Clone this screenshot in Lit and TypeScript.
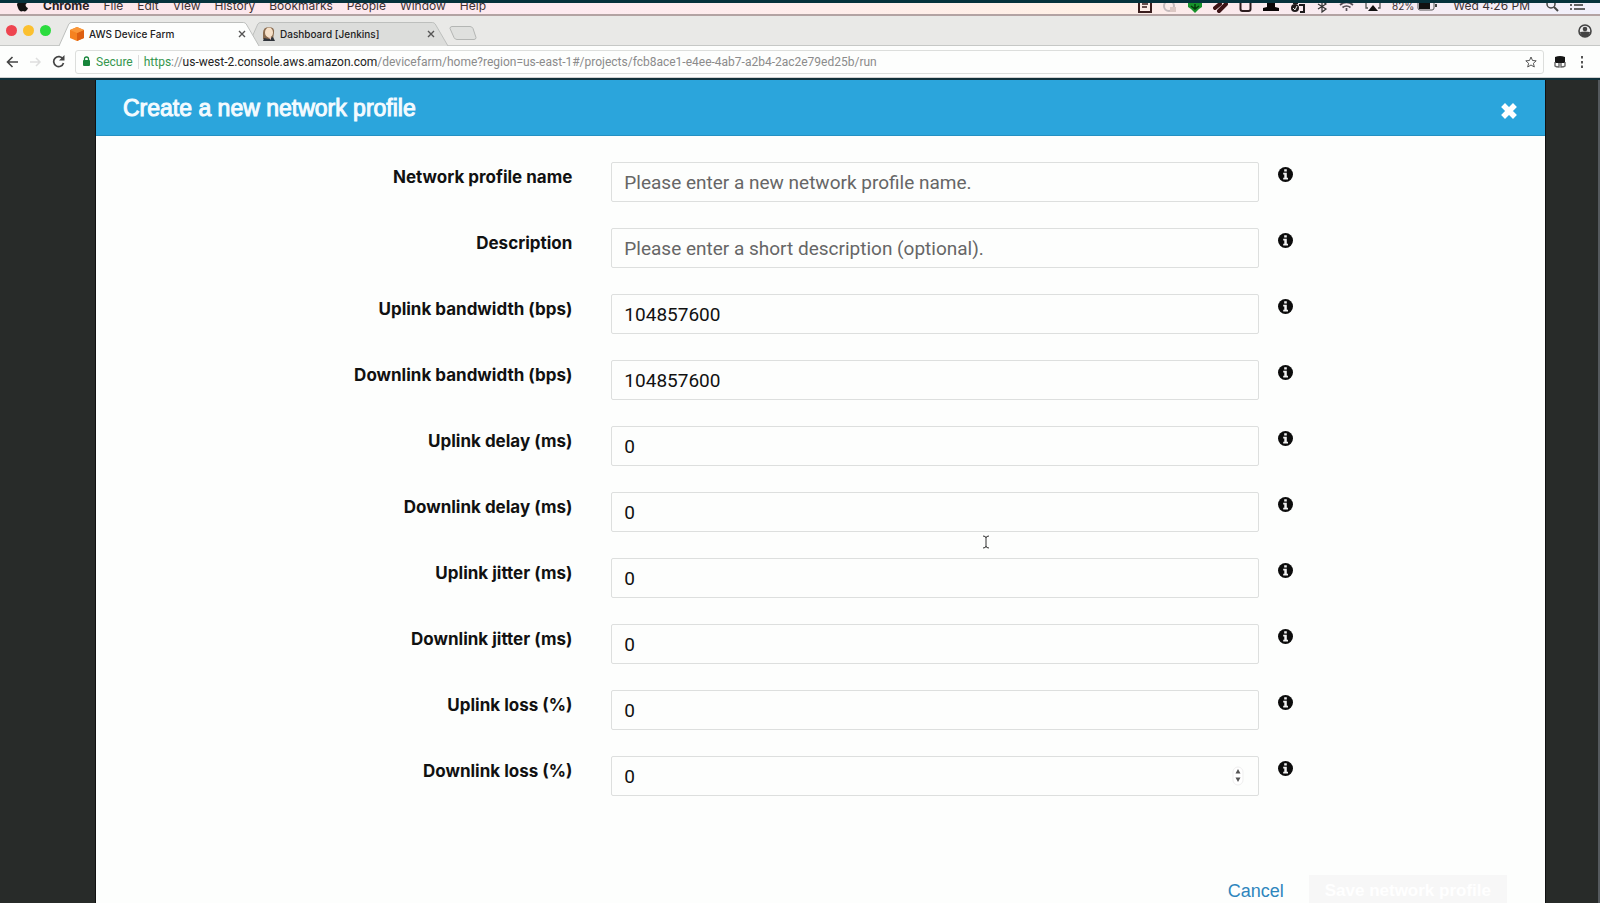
import { LitElement, html, css } from "lit";
import { customElement } from "lit/decorators.js";

interface Field {
  id: string;
  label: string;
  type: "text" | "number";
  value?: string;
  placeholder?: string;
  spinner?: boolean;
}

const FIELDS: Field[] = [
  { id: "name", label: "Network profile name", type: "text", placeholder: "Please enter a new network profile name." },
  { id: "description", label: "Description", type: "text", placeholder: "Please enter a short description (optional)." },
  { id: "up-bandwidth", label: "Uplink bandwidth (bps)", type: "number", value: "104857600" },
  { id: "down-bandwidth", label: "Downlink bandwidth (bps)", type: "number", value: "104857600" },
  { id: "up-delay", label: "Uplink delay (ms)", type: "number", value: "0" },
  { id: "down-delay", label: "Downlink delay (ms)", type: "number", value: "0" },
  { id: "up-jitter", label: "Uplink jitter (ms)", type: "number", value: "0" },
  { id: "down-jitter", label: "Downlink jitter (ms)", type: "number", value: "0" },
  { id: "up-loss", label: "Uplink loss (%)", type: "number", value: "0" },
  { id: "down-loss", label: "Downlink loss (%)", type: "number", value: "0", spinner: true },
];

@customElement("mac-menu-bar")
class MacMenuBar extends LitElement {
  static styles = css`
    :host { display: block; border-top: 3px solid #06323c; border-bottom: 2px solid #b3a3a3; font: 12px/14px Inter, sans-serif; color: #3c3032; }
    .bar { display: flex; justify-content: space-between; align-items: flex-end; height: 11px; padding: 0 15px 0 16px; overflow: hidden; background: linear-gradient(90deg, #fbe6ea, #fdeaf0 35%, #fff0e6 68%, #fbe9ec 76%, #f1f0fb); }
    .menus, .status { display: flex; align-items: flex-end; }
    .menus { gap: 14px; padding-bottom: 1px; }
    .app { font-weight: 700; color: #2a2022; }
    .status { gap: 11px; }
    .text { padding-bottom: 1px; }
    .clock { padding: 0 5px 1px; }
    .small { font-size: 10px; }
    .battery { display: flex; align-items: flex-end; gap: 3px; }
    svg { display: block; flex: none; }
  `;
  render() {
    return html`<div class="bar">
      <nav class="menus">
        <svg width="13" height="16" viewBox="0 0 13 16"><path d="M9 1c0 2-1 3-3 3 0-2 1-3 3-3zM1 8c0-3 3-4 5-3 2-1 4-1 5 1-2 1-2 4 1 5-1 3-3 4-5 3-2 1-4 0-5-3z" fill="#111"/></svg>
        <span class="app">Chrome</span>
        ${["File", "Edit", "View", "History", "Bookmarks", "People", "Window", "Help"].map((m) => html`<span>${m}</span>`)}
      </nav>
      <div class="status">
        <svg width="14" height="14" viewBox="0 0 14 14"><path d="M1 0v12h12V0" fill="none" stroke="#3a1d1d" stroke-width="2"/><path d="M4 4h6M4 7h5" fill="none" stroke="#3a1d1d" stroke-width="1.300"/></svg>
        <svg width="14" height="14" viewBox="0 0 14 14"><circle cx="6" cy="6" r="5" fill="none" stroke="#c4babc" stroke-width="2"/><rect x="7" y="7" width="6" height="5" fill="#dcc8c4"/></svg>
        <svg width="14" height="14" viewBox="0 0 14 14"><path d="M0 3h14v4l-3 2-4 4-4-4-3-2z" fill="#17922b"/><path d="M7 4v6M3 6l4 3 4-3" fill="none" stroke="#063d0c" stroke-width="1.500"/></svg>
        <svg width="15" height="14" viewBox="0 0 15 14"><path d="M2 8l5-4M6 11l7-7" stroke="#3c1316" stroke-width="4" stroke-linecap="round"/></svg>
        <svg width="13" height="14" viewBox="0 0 13 14"><path d="M1.500 2v7q0 2 2 2h6q2 0 2-2V2" fill="none" stroke="#2c1c1e" stroke-width="2"/></svg>
        <svg width="16" height="14" viewBox="0 0 16 14"><path d="M4 2h8v5l4 1v3H0V8l4-1z" fill="#0a0506"/></svg>
        <svg width="15" height="14" viewBox="0 0 15 14"><circle cx="5" cy="8" r="4" fill="#1e1a1c"/><path d="M3 8l2 2 2-4" fill="none" stroke="#eee"/><path d="M3 3h5M9 5h5v7h-4" fill="none" stroke="#1e1a1c" stroke-width="2"/></svg>
        <svg width="12" height="14" viewBox="0 0 12 14"><path d="M2 9l8-5-4-3v11l4-3-8-5" fill="none" stroke="#333" stroke-width="1.200"/></svg>
        <svg width="15" height="14" viewBox="0 0 15 14"><path d="M1 5q6.500-5 13 0M3.500 7.500q4-3 8 0M7.500 8v3" fill="none" stroke="#554d55" stroke-width="1.700"/></svg>
        <svg width="16" height="14" viewBox="0 0 16 14"><path d="M3 8H1V1h14v7h-2" fill="none" stroke="#555" stroke-width="1.300"/><path d="M8 5l5 6H3z" fill="#111"/></svg>
        <span class="battery"><span class="text small">82%</span>
          <svg width="20" height="14" viewBox="0 0 20 14"><rect x="1" y="1" width="16" height="9" rx="2" fill="none" stroke="#555"/><rect x="2" y="2" width="11" height="7" fill="#111"/><path d="M19 4v3" stroke="#444" stroke-width="2"/></svg>
        </span>
        <span class="clock">Wed 4:26 PM</span>
        <svg width="13" height="14" viewBox="0 0 13 14"><circle cx="5" cy="4" r="4" fill="none" stroke="#444" stroke-width="1.500"/><path d="M8 7l4 4" stroke="#444" stroke-width="2"/></svg>
        <svg width="15" height="14" viewBox="0 0 15 14"><path d="M0 5h2M4 5h9M0 9h2M4 9h11M4 1h11" stroke="#333" stroke-width="1.600"/></svg>
      </div>
    </div>`;
  }
}

@customElement("browser-chrome")
class BrowserChrome extends LitElement {
  static styles = css`
    :host { display: block; font: 12px/16px Roboto, sans-serif; color: #333; border-bottom: 2px solid #10303a; }
    svg { display: block; flex: none; }
    button { display: block; border: 0; padding: 0; background: none; color: inherit; font: inherit; }
    .strip { display: flex; align-items: flex-end; height: 29px; padding: 0 8px 0 6px; background: #e9e9e7; border-bottom: 1px solid #c6c8c6; }
    .lights { display: flex; gap: 6px; align-self: center; padding-right: 8px; }
    .light { width: 11px; height: 11px; border-radius: 50%; }
    .red { background: #ee4550; } .amber { background: #fbc02f; } .green { background: #2bdc3e; }
    .tab { position: relative; display: flex; align-items: center; gap: 5px; height: 24px; width: 201px; padding: 0 14px 0 11px; box-sizing: border-box; margin-bottom: -1px; }
    .tab + .tab { margin-left: -12px; padding-left: 14px; }
    .shape { position: absolute; inset: 0; width: 100%; height: 100%; z-index: 0; }
    .tab > :not(.shape) { position: relative; }
    .front { z-index: 1; }
    .title { flex: 1; white-space: nowrap; font: 500 10px/16px Inter, sans-serif; color: #222; }
    .new { align-self: center; padding-top: 4px; }
    .user { align-self: center; margin-left: auto; }
    .tools { display: flex; align-items: center; height: 32px; padding: 0 12px 0 6px; background: #fdfefd; border-bottom: 1px solid #d0d0d0; box-sizing: border-box; gap: 10px; }
    .address { flex: 1; display: flex; align-items: center; gap: 5px; height: 22px; border: 1px solid #dcdedc; border-radius: 3px; padding: 0 6px; }
    .secure { color: #35964d; padding-right: 5px; border-right: 1px solid #ddd; line-height: 14px; }
    .url { flex: 1; color: #8b8b8b; white-space: nowrap; }
    .scheme { color: #35964d; } .host { color: #222; }
  `;
  render() {
    const cross = html`<button aria-label="Close tab"><svg width="8" height="8" viewBox="0 0 8 8"><path d="M1 1l6 6M7 1L1 7" stroke="#555" stroke-width="1.400"/></svg></button>`;
    const shape = (fill: string) => html`<svg class="shape" viewBox="0 0 204 24" preserveAspectRatio="none"><path d="M0 24L10 2q1-1.500 3-1.500h174q2 0 3 1.500l13 22" fill=${fill} stroke="#bcbebc"/></svg>`;
    return html`
      <div class="strip">
        <div class="lights"><i class="light red"></i><i class="light amber"></i><i class="light green"></i></div>
        <div class="tab front">${shape("#fdfefd")}
          <svg width="14" height="14" viewBox="0 0 14 14"><path d="M7 0l7 3v8l-7 3-7-3V3z" fill="#f58220"/><path d="M7 6l7-3v8l-7 3z" fill="#dd5f10"/><path d="M0 3l7 3 7-3-7-3z" fill="#f9973a"/></svg>
          <span class="title">AWS Device Farm</span>${cross}
        </div>
        <div class="tab">${shape("#dcdddb")}
          <svg width="13" height="14" viewBox="0 0 13 14"><path d="M1 12V6q0-6 6-6t5 6l-1 6z" fill="#8a6c50"/><ellipse cx="7" cy="5.500" rx="4" ry="5" fill="#f6e0c8"/><path d="M1 14l1-3 5 1 4-2 2 4z" fill="#30343b"/><path d="M6 10h3v3z" fill="#e9c9c0"/></svg>
          <span class="title">Dashboard [Jenkins]</span>${cross}
        </div>
        <button class="new" aria-label="New tab"><svg width="28" height="14" viewBox="0 0 28 14"><path d="M3 .5h18q2 0 3 2l3 9q0 2-2 2H8q-2 0-3-2L1 2.500Q1 .5 3 .5z" fill="#dfe0de" stroke="#b4b6b4"/></svg></button>
        <svg class="user" width="14" height="14" viewBox="0 0 14 14"><circle cx="7" cy="7" r="6" fill="#eee" stroke="#444" stroke-width="1.600"/><circle cx="7" cy="5" r="2.300" fill="#444"/><path d="M2 8q5-1 10 0-1 5-5 5T2 8z" fill="#444"/></svg>
      </div>
      <div class="tools">
        <button aria-label="Back"><svg width="13" height="12" viewBox="0 0 13 12"><path d="M12 6H1.500M6.500 1l-5 5 5 5" fill="none" stroke="#444" stroke-width="1.600"/></svg></button>
        <button aria-label="Forward"><svg width="13" height="12" viewBox="0 0 13 12"><path d="M1 6h10M7 2l4 4-4 4" fill="none" stroke="#dedede" stroke-width="1.500"/></svg></button>
        <button aria-label="Reload"><svg width="13" height="13" viewBox="0 0 13 13"><path d="M11 4A5 5 0 1 0 11.500 8" fill="none" stroke="#444" stroke-width="1.700"/><path d="M12.500 0v5.500H7z" fill="#444"/></svg></button>
        <div class="address">
          <svg width="9" height="11" viewBox="0 0 9 11"><rect x="1" y="4" width="7" height="6" rx="1" fill="#16853a"/><path d="M2.500 5V3q0-2 2-2t2 2v2" fill="none" stroke="#16853a" stroke-width="1.300"/></svg>
          <span class="secure">Secure</span>
          <span class="url"><span class="scheme">https</span>://<span class="host">us-west-2.console.aws.amazon.com</span>/devicefarm/home?region=us-east-1#/projects/fcb8ace1-e4ee-4ab7-a2b4-2ac2e79ed25b/run</span>
          <svg width="12" height="12" viewBox="0 0 12 12"><path d="M6 1l1.500 3.500 3.700.3-2.800 2.500.9 3.700L6 9l-3.300 2 .9-3.700L.8 4.800l3.700-.3z" fill="none" stroke="#555"/></svg>
        </div>
        <svg width="12" height="12" viewBox="0 0 12 12"><path d="M1 1q5-2 10 0v6H1z" fill="#151515"/><path d="M1 6v4q1 1 4 1V7M11 6v4q-1 1-4 1V7" fill="none" stroke="#666" stroke-width="1.400"/></svg>
        <svg width="12" height="12" viewBox="0 0 12 12"><path d="M6 0v2.500M6 5v2.500M6 9.500V12" stroke="#555" stroke-width="2"/></svg>
      </div>`;
  }
}

@customElement("profile-dialog")
class ProfileDialog extends LitElement {
  static styles = css`
    :host { display: block; background: #fdfefd; font-family: "Liberation Sans", Arial, sans-serif; color: #111; border: solid #111; border-width: 0 1px; }
    .header { display: flex; align-items: center; justify-content: space-between; height: 56px; padding: 0 28px 0 27px; background: #2ba5dc; border-bottom: 1px solid #2590c2; box-sizing: border-box; }
    h1 { margin: 0; font-size: 23px; line-height: 28px; font-weight: 400; color: #f4fbff; -webkit-text-stroke: 1px #f4fbff; }
    button { border: 0; padding: 0; background: none; font: inherit; }
    .close { padding-top: 6px; }
    svg { display: block; }
    form { display: grid; gap: 26px; padding-top: 26px; }
    .row { display: grid; grid-template-columns: 515fr 647fr 286fr; align-items: start; }
    label { padding: 3px 39px 0 0; text-align: right; font: 700 17px/24px Inter, sans-serif; }
    .control { position: relative; display: block; }
    input { display: block; width: 100%; height: 40px; box-sizing: border-box; border: 1px solid #dddfde; border-radius: 2px; padding: 0 12px; background: #fdfefd; font: 19px/24px Roboto, sans-serif; color: #111; outline: 0; appearance: textfield; }
    input::placeholder { color: #666; opacity: 1; }
    input::-webkit-inner-spin-button { appearance: none; margin: 0; }
    .spin { position: absolute; right: 15px; top: 10px; }
    .info { justify-self: start; margin-left: 19px; padding-top: 5px; }
    .footer { display: flex; justify-content: flex-end; align-items: center; padding: 79px 38px 20px 0; gap: 25px; font-size: 18px; line-height: 22px; }
    .cancel { color: #2f86bd; text-decoration: none; }
    .save { background: #f7f7f7; color: #fff; font-size: 17px; font-weight: 700; height: 32px; padding: 0 16px; }
  `;
  private row(f: Field) {
    return html`<div class="row">
      <label for=${f.id}>${f.label}</label>
      <span class="control">
        <input id=${f.id} type=${f.type} .value=${f.value ?? ""} placeholder=${f.placeholder ?? ""} />
        ${f.spinner ? html`<svg class="spin" width="12" height="20" viewBox="0 0 12 20"><rect x="1" y="1" width="10" height="18" rx="5" fill="#fff" stroke="#efefef"/><path d="M6 3l2.500 4.500h-5zM6 16l2.500-4.500h-5z" fill="#555"/></svg>` : ""}
      </span>
      <button class="info" type="button" aria-label="About ${f.label}">
        <svg width="15" height="15" viewBox="0 0 15 15"><circle cx="7.500" cy="7.500" r="7.500" fill="#0c0c0c"/><path d="M6.200 2.200h2.600v2.300H6.200zM5.200 5.700h3.600v5h1.200v1.700H5.200v-1.700h1.100V7.400H5.200z" fill="#f2f2f2"/></svg>
      </button>
    </div>`;
  }
  render() {
    return html`
      <header class="header">
        <h1>Create a new network profile</h1>
        <button class="close" aria-label="Close"><svg width="16" height="16" viewBox="0 0 16 16"><path d="M4 4l8 8M12 4l-8 8" stroke="#fff" stroke-width="5.500" stroke-linecap="square"/></svg></button>
      </header>
      <form>${FIELDS.map((f) => this.row(f))}</form>
      <footer class="footer"><a class="cancel" href="#">Cancel</a><button class="save" disabled>Save network profile</button></footer>`;
  }
}

@customElement("app-root")
class AppRoot extends LitElement {
  static styles = css`
    :host { display: block; height: 100vh; overflow: hidden; position: relative; background: #282b29; }
    .page { padding: 0 52px 0 95px; border-right: 2px solid #555a5e; }
    .pointer { position: absolute; left: 982px; top: 535px; }
  `;
  render() {
    return html`
      <mac-menu-bar></mac-menu-bar>
      <browser-chrome></browser-chrome>
      <main class="page"><profile-dialog></profile-dialog></main>
      <svg class="pointer" width="8" height="14" viewBox="0 0 8 14"><path d="M1 1q3 0 3 2 0-2 3-2M4 3v8M1 13q3 0 3-2 0 2 3 2" fill="none" stroke="#333"/></svg>`;
  }
}
